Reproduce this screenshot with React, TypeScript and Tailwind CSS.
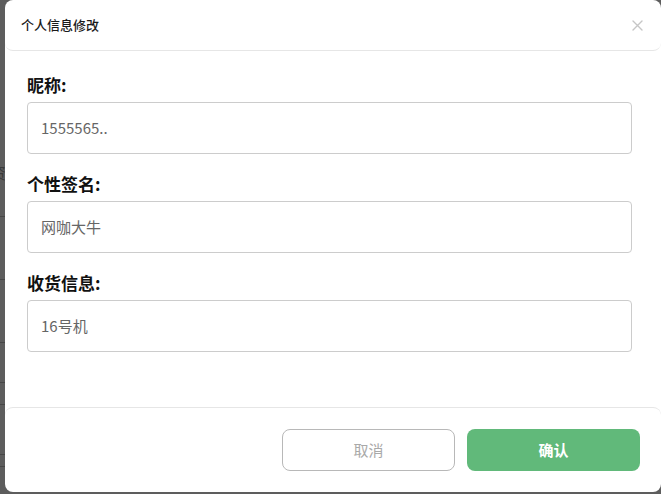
import React from 'react';

const fields = [
  { label: '昵称:', value: '1555565..' },
  { label: '个性签名:', value: '网咖大牛' },
  { label: '收货信息:', value: '16号机' },
];

// faint rows of the page sitting behind the overlay
const bgRows = [217, 63, 63, 40, 22, 50, 12];

export default function App() {
  return (
    <div
      className="relative h-[494px] w-[661px] overflow-hidden bg-[#5d5d5d]"
      style={{ fontFamily: '"Noto Sans CJK SC", "Noto Sans", sans-serif' }}
    >
      {/* page behind the mask */}
      <div className="flex flex-col">
        {bgRows.map((h, i) => (
          <div key={i} className="relative border-b border-[#474747]" style={{ height: h }}>
            {i === 0 && (
              <span className="absolute left-[-10px] top-[160px] text-[16px] text-[#3a3a3a]">资</span>
            )}
          </div>
        ))}
      </div>

      {/* dialog */}
      <div className="absolute left-[5px] top-0 flex h-[492px] w-[656px] flex-col rounded-lg bg-white">
        <div className="flex h-[51px] shrink-0 items-center justify-between rounded-b-lg border-b border-[#e6e6e6] pl-4 pr-[16px]">
          <span className="text-[13px] font-medium text-[#1a1a1a]">个人信息修改</span>
          <button className="flex h-4 w-4 items-center justify-center">
            <svg width="11" height="11" viewBox="0 0 11 11" fill="none">
              <path d="M1 1L10 10M10 1L1 10" stroke="#c6c6c6" strokeWidth="1.4" strokeLinecap="round" />
            </svg>
          </button>
        </div>

        <div className="flex flex-1 flex-col px-[22px] pt-[22px]">
          {fields.map((f) => (
            <div key={f.label} className="mb-[18px] flex flex-col">
              <label className="text-[17px] font-bold leading-6 text-[#111]">{f.label}</label>
              <div className="mt-[5px] flex h-[52px] w-[605px] items-center rounded border border-[#cccccc] px-[13px] text-[15px] text-[#666]">
                {f.value}
              </div>
            </div>
          ))}
        </div>

        <div className="flex h-[85px] shrink-0 items-center justify-end gap-3 rounded-t-lg border-t border-[#e6e6e6] pr-[21px]">
          <button className="h-[42px] w-[173px] rounded-lg border border-[#b8b8b8] bg-white text-[15px] text-[#a9a9a9]">
            取消
          </button>
          <button className="h-[42px] w-[173px] rounded-lg bg-[#61b97a] text-[15px] font-bold text-white">
            确认
          </button>
        </div>
      </div>
    </div>
  );
}
